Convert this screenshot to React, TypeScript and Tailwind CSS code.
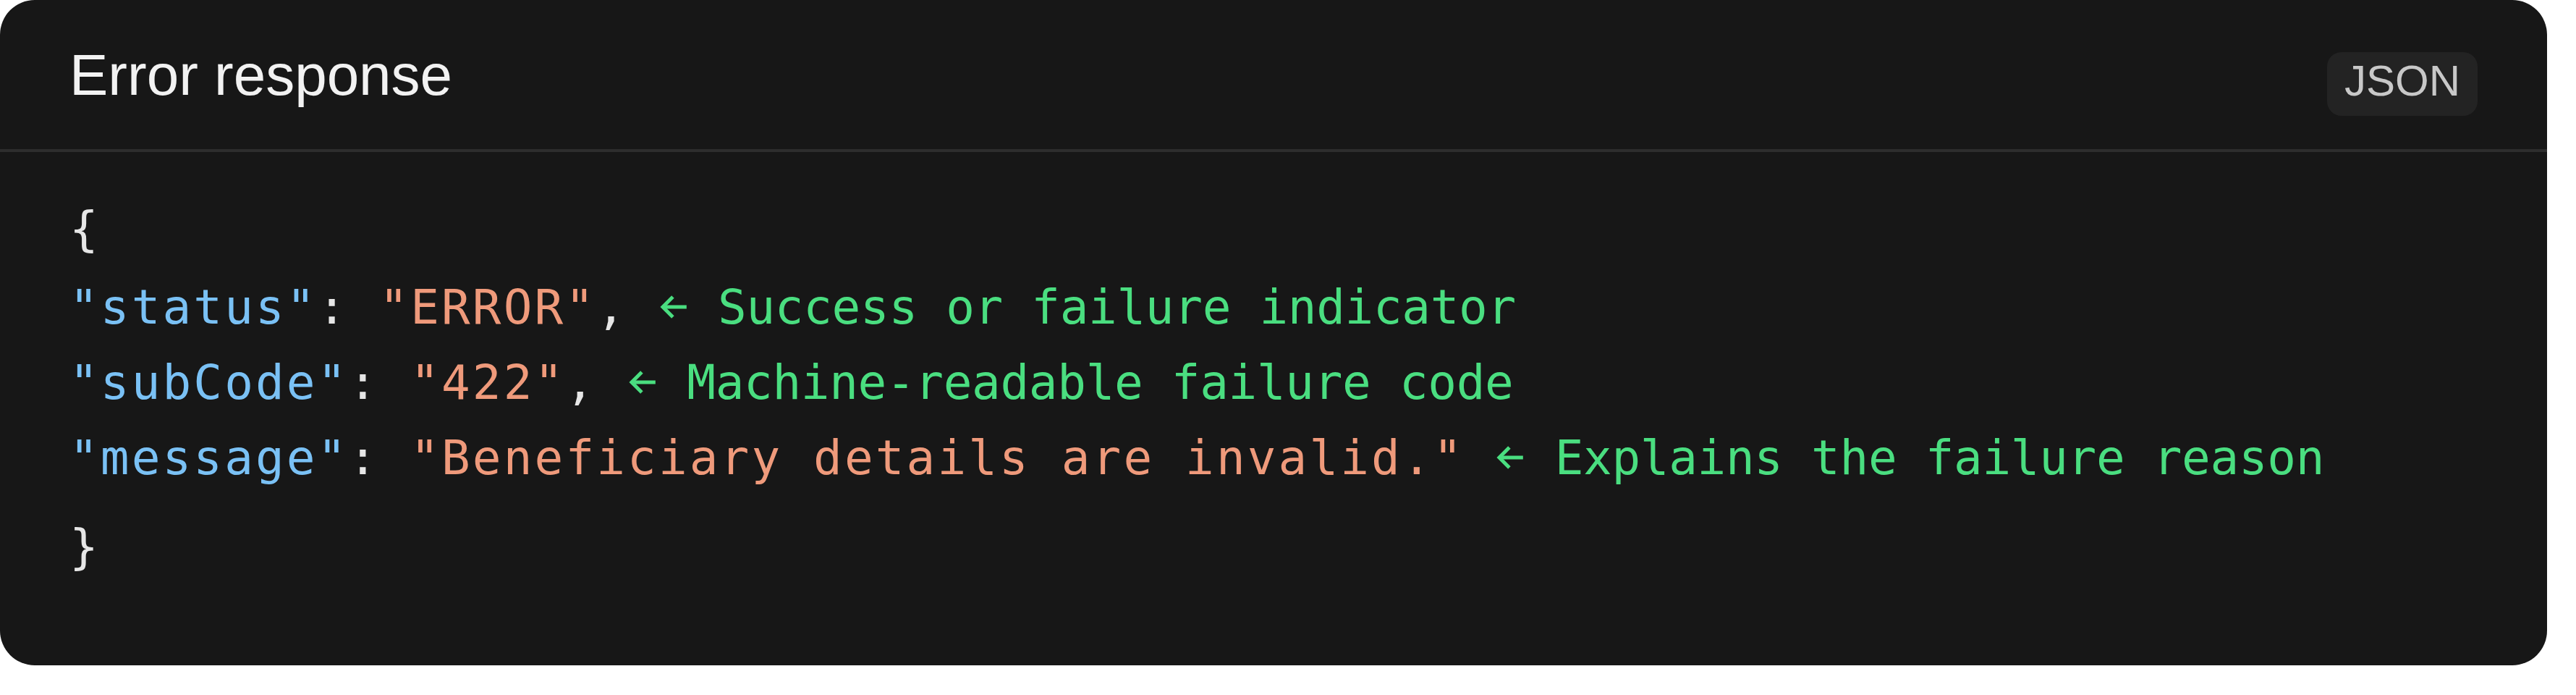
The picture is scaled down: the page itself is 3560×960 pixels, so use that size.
import React from "react";

type Line = {
  key: string;
  value: string;
  comment: string;
};

const lines: Line[] = [
  { key: '"status"', value: '"ERROR"', comment: "Success or failure indicator" },
  { key: '"subCode"', value: '"422"', comment: "Machine-readable failure code" },
  { key: '"message"', value: '"Beneficiary details are invalid."', comment: "Explains the failure reason" },
];

function Arrow() {
  return (
    <svg
      viewBox="0 0 43 36"
      className="inline-block w-[42.8px] h-[36px] align-[5px]"
      fill="none"
      stroke="#4ade80"
      strokeWidth={5}
      aria-label="←"
    >
      <path d="M39 18H6" />
      <path d="M20 4L6 18L20 32" strokeLinejoin="miter" />
    </svg>
  );
}

function CodeLine({ line, trailingComma }: { line: Line; trailingComma: boolean }) {
  return (
    <div className="leading-[104px] whitespace-pre">
      <span className="tracking-[3.1px]">
        <span className="text-[#7ac1f5]">{line.key}</span>
        <span className="text-[#e6e6e6]">: </span>
        <span className="text-[#ef9a7b]">{line.value}</span>
        <span className="text-[#e6e6e6]">{trailingComma ? ", " : " "}</span>
      </span>
      <Arrow />
      <span className="text-[#4ade80] tracking-[-0.35px]"> {line.comment}</span>
    </div>
  );
}

export default function App() {
  return (
    <div className="min-h-screen w-full bg-white">
      <div className="w-[3520px] rounded-[48px] bg-[#171717] overflow-hidden">
        <div className="h-[210px] border-b-4 border-[#2d2d2d] px-[96px] flex items-start justify-between">
          <div className="mt-[64px] leading-[80px] text-[80px] text-[#f2f2f2] font-['Liberation_Sans',Arial,sans-serif]">
            Error response
          </div>
          <div className="mt-[72px] h-[88px] rounded-[20px] bg-[#232323] px-[24px] pt-[10px] pb-[18px] leading-[60px] text-[60px] text-[#c8c8c8] font-['Liberation_Sans',Arial,sans-serif]">
            JSON
          </div>
        </div>
        <div className="px-[96px] pt-[55px] pb-[111px] text-[66px] font-['DejaVu_Sans_Mono',monospace]">
          <div className="leading-[104px] mb-[4px] text-[#e6e6e6]">{"{"}</div>
          {lines.map((l, i) => (
            <CodeLine key={l.key} line={l} trailingComma={i < lines.length - 1} />
          ))}
          <div className="leading-[104px] mt-[19px] text-[#e6e6e6]">{"}"}</div>
        </div>
      </div>
    </div>
  );
}
